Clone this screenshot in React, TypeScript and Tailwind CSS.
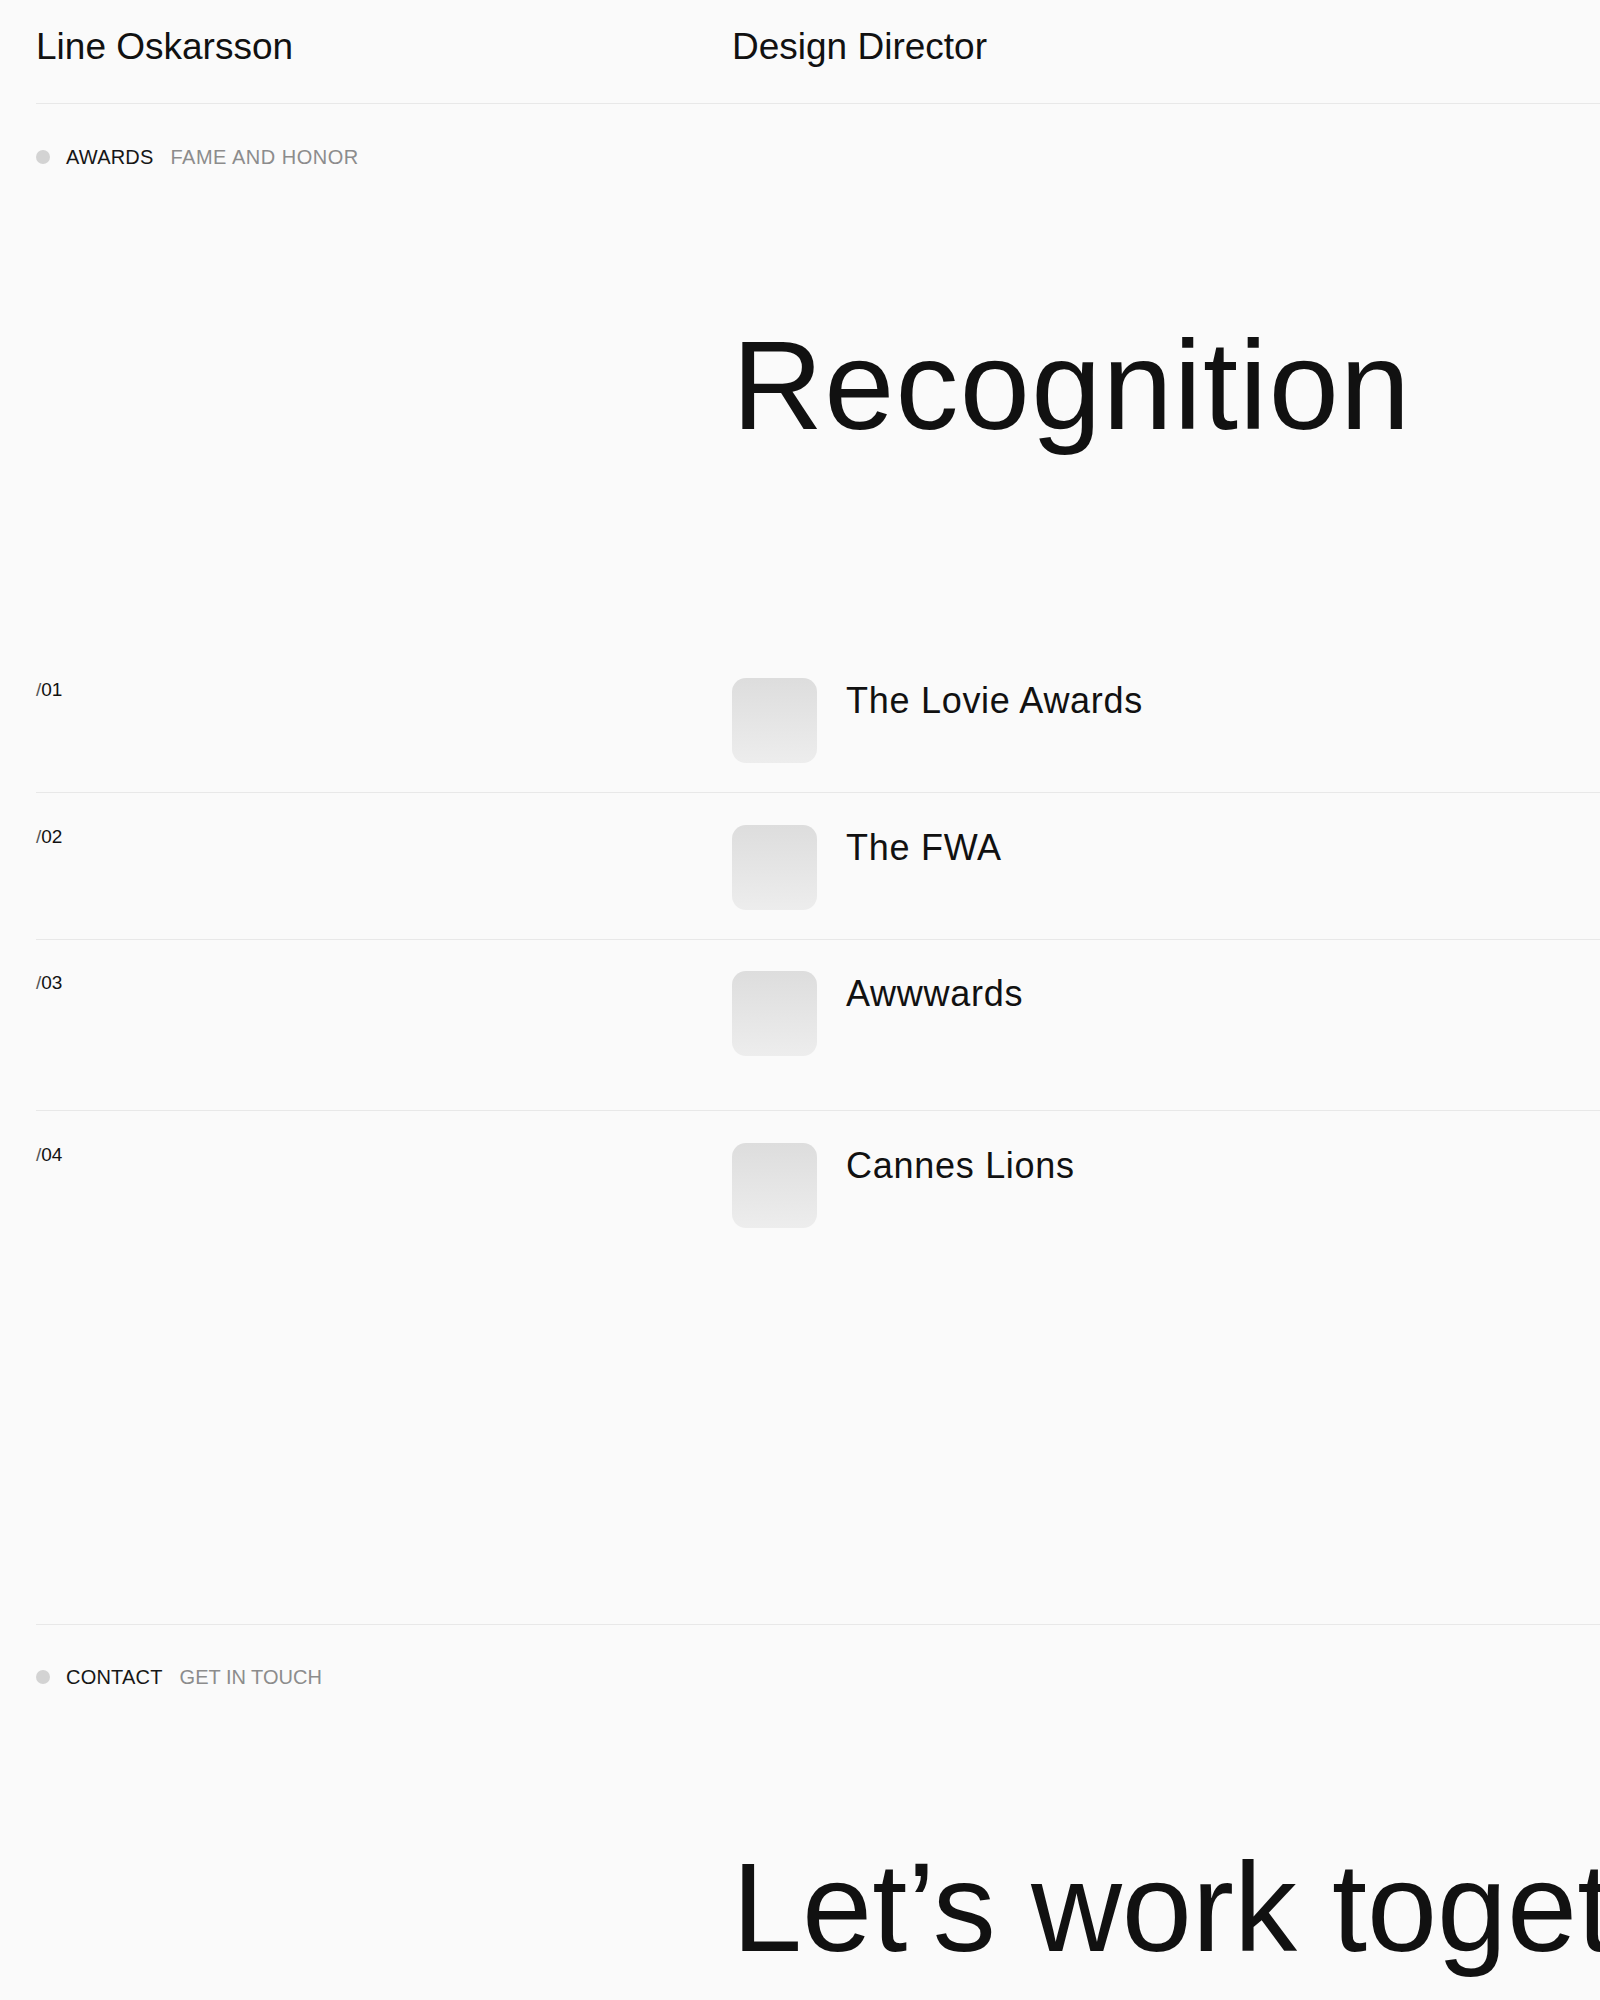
import React from 'react';

const awards = [
  { id: '01', title: 'The Lovie Awards', rowClass: 'pt-8 pb-[29px] border-b border-[#e8e8e8]' },
  { id: '02', title: 'The FWA', rowClass: 'pt-8 pb-[29px] border-b border-[#e8e8e8]' },
  { id: '03', title: 'Awwwards', rowClass: 'pt-[31px] pb-[54px] border-b border-[#e8e8e8]' },
  { id: '04', title: 'Cannes Lions', rowClass: 'pt-8 pb-[29px]' },
];

const SectionLabel = ({ name, sub, subClass }: { name: string; sub: string; subClass: string }) => (
  <div className="flex items-center text-[20px] leading-[24px] uppercase">
    <span className="w-[14px] h-[14px] rounded-full bg-[#d3d3d3]" />
    <span className="ml-4 text-[#161616] tracking-[0.01em]">{name}</span>
    <span className={`ml-[17px] text-[#8c8c8c] ${subClass}`}>{sub}</span>
  </div>
);

const App = () => {
  return (
    <div className="min-h-screen w-full overflow-hidden bg-[#fafafa] text-[#111] font-['Liberation_Sans',Arial,sans-serif]">
      <div className="pl-[36px]">
        <header className="grid grid-cols-[696px_1fr] pt-[25px] pb-[34px] border-b border-[#e8e8e8] text-[37px] leading-[1.2]">
          <div>Line Oskarsson</div>
          <div>Design Director</div>
        </header>

        <section>
          <div className="mt-[41px]">
            <SectionLabel name="Awards" sub="Fame and Honor" subClass="tracking-[0.025em]" />
          </div>

          <div className="grid grid-cols-[696px_1fr] mt-[154px]">
            <h2 className="col-start-2 text-[126px] leading-none tracking-[0.01em] whitespace-nowrap">Recognition</h2>
          </div>

          <div className="mt-[197px]">
            {awards.map((award) => (
              <div key={award.id} className={`grid grid-cols-[696px_1fr] items-start ${award.rowClass}`}>
                <div className="text-[19px] leading-[27px] -mt-[2px]">
                  <span className="text-[#555]">/</span>
                  {award.id}
                </div>
                <div className="flex items-start gap-[29px]">
                  <div className="w-[85px] h-[85px] shrink-0 rounded-[14px] bg-gradient-to-b from-[#dddddd] to-[#ededed]" />
                  <div className="text-[36px] leading-[1.25] tracking-[0.02em]">{award.title}</div>
                </div>
              </div>
            ))}
          </div>
        </section>

        <section className="mt-[367px] border-t border-[#e8e8e8] pt-[40px]">
          <SectionLabel name="Contact" sub="Get in touch" subClass="tracking-normal" />
          <div className="grid grid-cols-[696px_1fr] mt-[156px]">
            <h2 className="col-start-2 text-[126px] leading-none whitespace-nowrap">Let’s work together</h2>
          </div>
        </section>
      </div>
    </div>
  );
};

export default App;
